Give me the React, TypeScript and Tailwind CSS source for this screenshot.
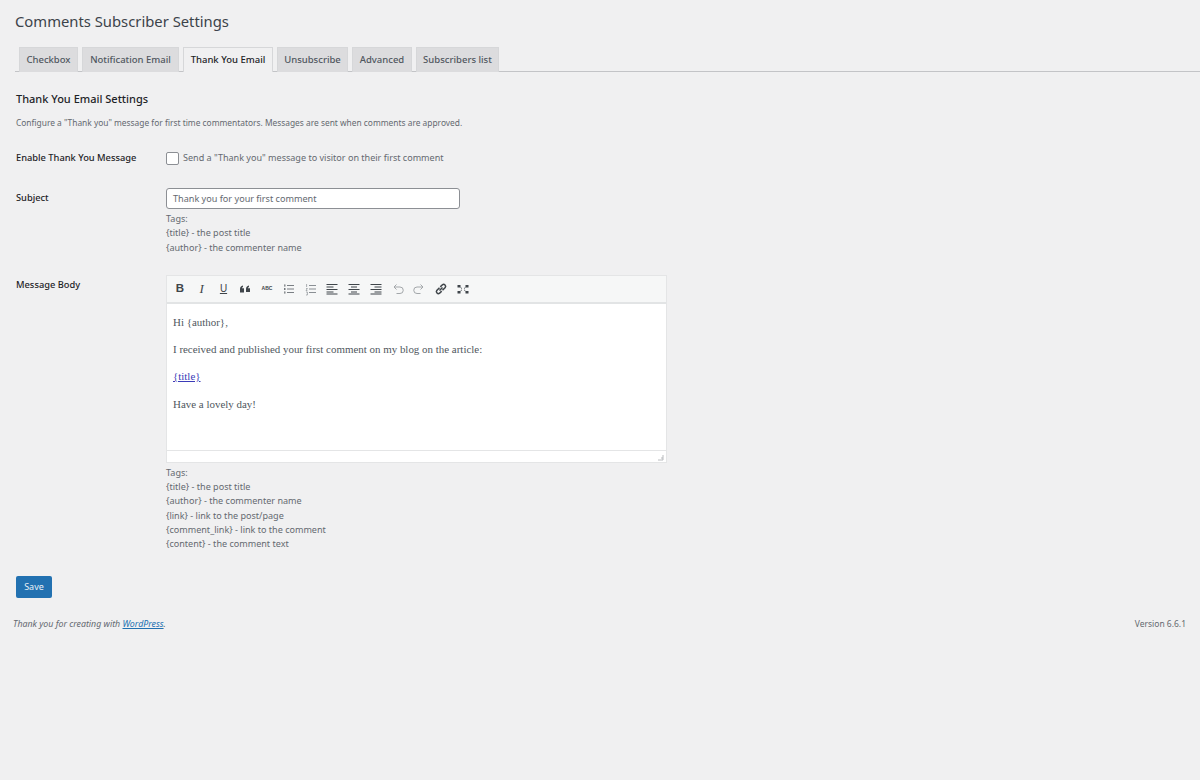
const TABS = [
  { label: "Checkbox", w: "w-[59px]" },
  { label: "Notification Email", w: "w-[97px]" },
  { label: "Thank You Email", w: "w-[90px]", active: true },
  { label: "Unsubscribe", w: "w-[71px]" },
  { label: "Advanced", w: "w-[60px]" },
  { label: "Subscribers list", w: "w-[83px]" },
];

const SUBJECT_TAGS = ["Tags:", "{title} - the post title", "{author} - the commenter name"];
const BODY_TAGS = [
  "Tags:",
  "{title} - the post title",
  "{author} - the commenter name",
  "{link} - link to the post/page",
  "{comment_link} - link to the comment",
  "{content} - the comment text",
];

function Tags({ items }: { items: string[] }) {
  return (
    <div className="text-[9.05px] leading-[14.3px] text-[#646970]">
      {items.map((t) => (
        <div key={t}>{t}</div>
      ))}
    </div>
  );
}

function Icon({ children }: { children: React.ReactNode }) {
  return (
    <span className="ml-[7.75px] flex h-[14px] w-[14px] items-center justify-center">
      <svg width="14" height="14" viewBox="0 0 14 14" fill="none" stroke="#50565c" strokeWidth="1">
        {children}
      </svg>
    </span>
  );
}

function Toolbar() {
  return (
    <div className="flex h-[28px] items-center border-b-2 border-[#e2e4e5] bg-[#f6f7f7] pl-[6px]">
      <span className="w-[14px] text-center font-['Liberation_Sans',sans-serif] text-[11.5px] font-bold text-[#3f454a]">B</span>
      <span className="ml-[7.75px] w-[14px] text-center font-['Liberation_Serif',serif] text-[13px] italic text-[#3f454a]">I</span>
      <span className="ml-[7.75px] w-[14px] text-center font-['Liberation_Sans',sans-serif] text-[10px] text-[#3f454a] underline">U</span>
      <Icon>
        <path d="M2 7a3.6 3.6 0 0 1 3-3.6v1.3a2 2 0 0 0-1 1.6h2V10.500H2zM8 7a3.600 3.600 0 0 1 3-3.600v1.300a2 2 0 0 0-1 1.600h2v3.700H8z" fill="#3f454a" stroke="none" />
      </Icon>
      <span className="ml-[7.75px] w-[14px] text-center font-['Liberation_Sans',sans-serif] text-[5px] font-bold text-[#3f454a]">ABC</span>
      <Icon>
        <path d="M5 3.5h7M5 7h7M5 10.5h7" stroke="#7a7f84" />
        <path d="M2 3h1.5M2 4h1.5M2 6.5h1.5M2 7.5h1.5M2 10h1.5M2 11h1.5" stroke="#50565c" strokeWidth="0.8" />
      </Icon>
      <Icon>
        <path d="M5 3.5h7M5 7h7M5 10.5h7" stroke="#8a8f94" />
        <path d="M2.6 2v3M2 6.5h1.4l-1.4 2h1.4M2 10h1.4v3H2" stroke="#8a8f94" strokeWidth="0.7" />
      </Icon>
      <Icon>
        <path d="M1.500 2.500h11M1.500 5h7M1.500 7.500h11M1.500 10h7M1.500 12h11" stroke="#3f454a" />
      </Icon>
      <Icon>
        <path d="M1.500 2.500h11M4 5h6M1.500 7.500h11M4 10h6M1.500 12h11" stroke="#3f454a" />
      </Icon>
      <Icon>
        <path d="M1.500 2.500h11M5.500 5h7M1.500 7.500h11M5.500 10h7M1.500 12h11" stroke="#3f454a" />
      </Icon>
      <Icon>
        <path d="M3 5h6a3 3 0 0 1 0 6.500H5.500M3 5l2.500-2.500M3 5l2.500 2.500" stroke="#a3a7aa" />
      </Icon>
      <Icon>
        <path d="M11 5H5a3 3 0 0 0 0 6.500h3.500M11 5 8.500 2.500M11 5 8.500 7.500" stroke="#a3a7aa" />
      </Icon>
      <Icon>
        <path d="M5.500 8.500 8.500 5.500M5.500 5.700 2.800 8.400a2 2 0 0 0 2.800 2.800l2.100-2.100M8.500 8.300l2.700-2.700A2 2 0 0 0 8.400 2.800L6.300 4.900" strokeWidth="1.5" stroke="#3f454a" />
      </Icon>
      <Icon>
        <path d="M1.500 3h3v2.400h-3zM9.500 3h3v2.400h-3zM1.500 9h3v2.400h-3zM9.500 9h3v2.400h-3z" fill="#3f454a" stroke="none" />
        <path d="M4.500 5.400 6 6.600M9.500 5.400 8 6.600M4.500 9 6 7.800M9.500 9 8 7.800" strokeWidth="0.9" stroke="#50565c" />
      </Icon>
    </div>
  );
}

function Editor() {
  return (
    <div className="w-[501px] border border-[#e4e5e6] bg-white">
      <Toolbar />
      <div className="h-[146px] px-[6px] pt-[12px] font-['Liberation_Serif',serif] text-[10.95px] leading-[13px] text-[#50575e]">
        <p>Hi {"{author}"},</p>
        <p className="mt-[14px]">I received and published your first comment on my blog on the article:</p>
        <p className="mt-[14px]">
          <a className="text-[#3b3bb8] underline">{"{title}"}</a>
        </p>
        <p className="mt-[15px]">Have a lovely day!</p>
      </div>
      <div className="flex h-[12px] items-end justify-end border-t border-[#e4e5e6] pb-[1px] pr-[2px]">
        <svg width="7" height="7" viewBox="0 0 7 7" stroke="#a8abae" strokeWidth="0.8">
          <path d="M1 6h5M4 4h2M6 1v5" />
        </svg>
      </div>
    </div>
  );
}

export default function App() {
  return (
    <div className="h-[780px] w-[1200px] overflow-hidden bg-[#f0f0f1] font-['Noto_Sans',sans-serif] text-[#3c434a]">
      <h1 className="pl-[15px] pt-[10px] text-[14.8px] leading-[22px] text-[#3c434a]">Comments Subscriber Settings</h1>

      <div className="ml-[15px] mt-[15px] flex h-[25px] gap-[4px] border-b border-[#c3c4c7] pl-[4px]">
        {TABS.map((t) => (
          <div
            key={t.label}
            className={`${t.w} flex h-[25px] items-center justify-center border border-b-0 border-[#d6d7d9] text-[9.5px] font-medium ${
              t.active ? "bg-[#f0f0f1] text-[#1d2327]" : "bg-[#dcdcde] text-[#50575e]"
            }`}
          >
            {t.label}
          </div>
        ))}
      </div>

      <div className="px-[16px]">
        <h2 className="mt-[19px] text-[11px] font-medium leading-[16px] text-[#1d2327]">Thank You Email Settings</h2>
        <p className="mt-[9px] text-[8.4px] leading-[14px] text-[#646970]">
          Configure a "Thank you" message for first time commentators. Messages are sent when comments are approved.
        </p>

        <div className="mt-[21px] flex items-center">
          <div className="w-[150px] text-[9.3px] font-medium leading-[14px] text-[#1d2327]">Enable Thank You Message</div>
          <span className="h-[13px] w-[13px] rounded-[2px] border border-[#8c8f94] bg-white" />
          <span className="ml-[4px] text-[9.05px] leading-[14px] text-[#646970]">Send a "Thank you" message to visitor on their first comment</span>
        </div>

        <div className="mt-[23px] flex">
          <div className="w-[150px] pt-[3px] text-[9.3px] font-medium leading-[14px] text-[#1d2327]">Subject</div>
          <div>
            <div className="flex h-[21px] w-[294px] items-center rounded-[3px] border border-[#8c8f94] bg-white pl-[6px] text-[9.1px] text-[#646970]">
              Thank you for your first comment
            </div>
            <div className="mt-[3px]">
              <Tags items={SUBJECT_TAGS} />
            </div>
          </div>
        </div>

        <div className="mt-[20px] flex">
          <div className="w-[150px] pt-[3px] text-[9.3px] font-medium leading-[14px] text-[#1d2327]">Message Body</div>
          <div>
            <Editor />
            <div className="mt-[3px]">
              <Tags items={BODY_TAGS} />
            </div>
          </div>
        </div>

        <button className="mt-[24px] flex h-[22px] w-[36px] items-center justify-center rounded-[2px] bg-[#2271b1] text-[9px] text-[#e8f0f6]">
          Save
        </button>
      </div>

      <div className="mt-[19px] flex items-center justify-between pl-[13px] pr-[14px] leading-[14px] text-[#646970]">
        <span className="text-[8.8px] italic">
          Thank you for creating with <a className="text-[#2271b1] underline">WordPress</a>.
        </span>
        <span className="text-[8.5px]">Version 6.6.1</span>
      </div>
    </div>
  );
}
